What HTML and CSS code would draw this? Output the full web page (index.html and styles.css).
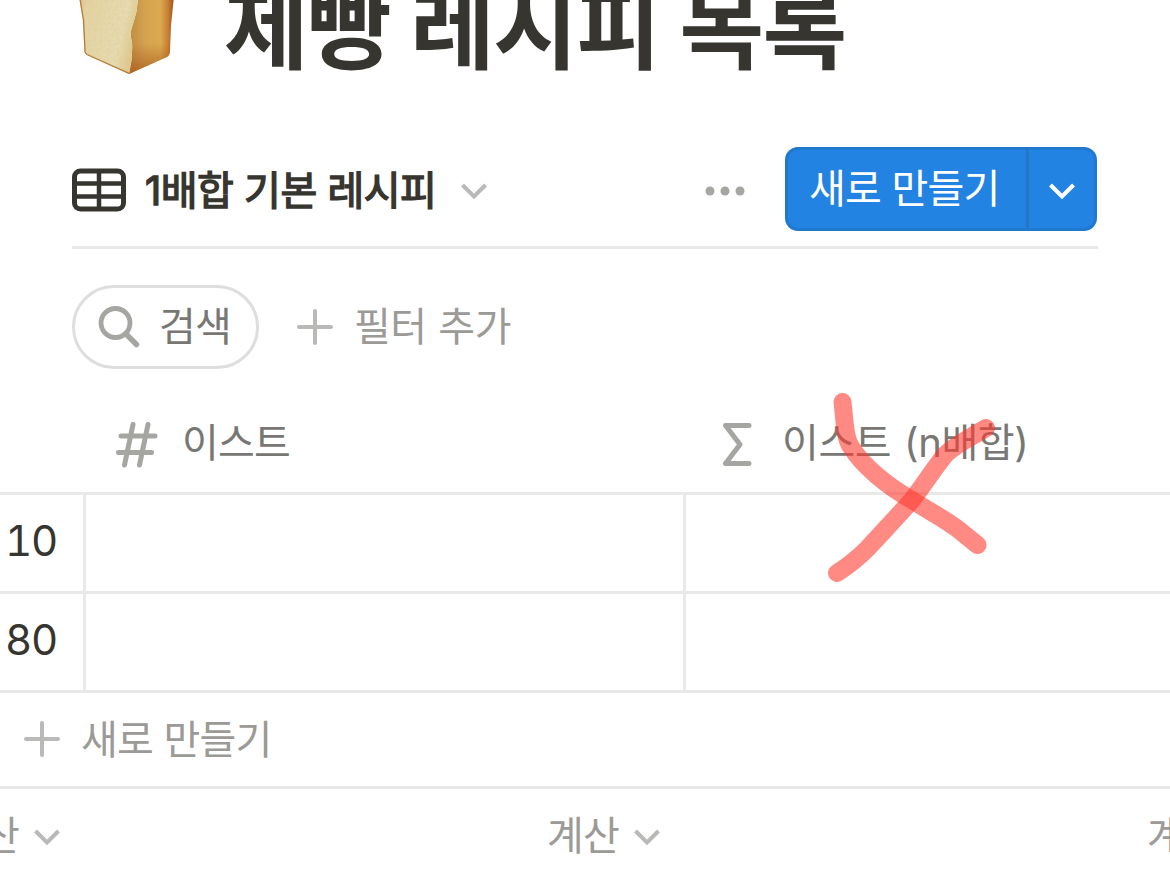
FILE: index.html
```
<!DOCTYPE html>
<html lang="ko">
<head>
  <meta charset="UTF-8">
  <title>제빵 레시피 목록</title>
  <meta name="viewport" content="width=device-width, initial-scale=1.0">
  <link rel="stylesheet" href="styles.css">
</head>
<body>
  <header class="page-header">
    <svg class="bread" width="96" height="76" viewBox="79 0 96 76">
      <defs>
        <linearGradient id="front" x1="0" y1="0" x2="1" y2="0.3">
          <stop offset="0" stop-color="#d9bd84"/>
          <stop offset="0.15" stop-color="#e3d3a2"/>
          <stop offset="0.8" stop-color="#e6dbb2"/>
          <stop offset="1" stop-color="#dcc78c"/>
        </linearGradient>
        <linearGradient id="side" x1="0" y1="0" x2="1" y2="0">
          <stop offset="0" stop-color="#c08a42"/>
          <stop offset="0.35" stop-color="#d3a350"/>
          <stop offset="0.7" stop-color="#dba94f"/>
          <stop offset="0.87" stop-color="#c67f33"/>
          <stop offset="1" stop-color="#a04f1c"/>
        </linearGradient>
        <linearGradient id="shade" x1="0" y1="0" x2="0" y2="1">
          <stop offset="0.6" stop-color="#b0601f" stop-opacity="0"/>
          <stop offset="1" stop-color="#a9591d" stop-opacity="0.8"/>
        </linearGradient>
        <filter id="crumb" x="0" y="0" width="1" height="1">
          <feTurbulence type="fractalNoise" baseFrequency="0.35" numOctaves="2" seed="4"/>
          <feColorMatrix values="0 0 0 0 0.76  0 0 0 0 0.62  0 0 0 0 0.32  1.6 0 0 0 -0.62"/>
          <feComposite in2="SourceGraphic" operator="in"/>
        </filter>
      </defs>
      <path d="M138 -4 Q138 10 133 24 Q129 34 132 42 Q133 58 129 74 L167 57 Q170 55 170 51 L171 26 L174 -4 Z" fill="url(#side)"/>
      <path d="M138 -4 Q138 10 133 24 Q129 34 132 42 Q133 58 129 74 L167 57 Q170 55 170 51 L171 26 L174 -4 Z" fill="url(#shade)"/>
      <path d="M79 -4 L83 20 L84.500 50 Q84 53 87 55 L129 74 Q133 58 132 42 Q129 34 133 24 Q138 10 138 -4 Z" fill="url(#front)"/>
      <path d="M79 -4 L83 20 L84.500 50 Q84 53 87 55 L129 74 Q133 58 132 42 Q129 34 133 24 Q138 10 138 -4 Z" filter="url(#crumb)"/>
      <path d="M79.500 -4 L83.500 20 L85 50 Q84.500 53 87 54.500 L129 73.300" fill="none" stroke="#b87b38" stroke-width="1.300"/>
    </svg>
    <h1>제빵 레시피 목록</h1>
  </header>

  <nav class="view-bar">
    <div class="view-tab">
      <svg width="54" height="44" viewBox="0 0 54 44" fill="none" stroke="currentColor">
        <rect x="2.500" y="3" width="49" height="38" rx="6" stroke-width="5"/>
        <path d="M4 15.500H50M4 28.500H50M27 4V40" stroke-width="4.500"/>
      </svg>
      <span>1배합 기본 레시피</span>
      <svg class="chevron" width="26" height="17" viewBox="0 0 26 17"><path d="M1.500 2L13 13.500L24.500 2"/></svg>
    </div>
    <div class="view-actions">
      <svg class="dots" width="40" height="10" viewBox="0 0 40 10"><circle cx="5" cy="5" r="4.500"/><circle cx="20" cy="5" r="4.500"/><circle cx="35" cy="5" r="4.500"/></svg>
      <div class="new-btn">
        <span class="new-label">새로 만들기</span>
        <span class="new-more">
          <svg class="chevron" width="26" height="17" viewBox="0 0 26 17"><path d="M1.500 2L13 13.500L24.500 2"/></svg>
        </span>
      </div>
    </div>
  </nav>

  <div class="filters">
    <div class="search">
      <svg width="42" height="42" viewBox="0 0 42 42" fill="none" stroke="currentColor">
        <circle cx="17.500" cy="17" r="14.500" stroke-width="4.800"/>
        <path d="M28 28L38.500 38.500" stroke-width="5.500" stroke-linecap="round"/>
      </svg>
      <span>검색</span>
    </div>
    <div class="add-filter">
      <svg class="plus" width="36" height="36" viewBox="0 0 36 36"><path d="M2 18H34M18 2V34"/></svg>
      <span>필터 추가</span>
    </div>
  </div>

  <main class="table">
    <div class="row head">
      <div class="cell"></div>
      <div class="cell">
        <svg class="prop-icon" width="42" height="46" viewBox="0 0 42 46"><path d="M5 14H39M2.500 30.500H35.500M17 2.500L8.500 43M32 2.500L23.500 43"/></svg>
        <span>이스트</span>
      </div>
      <div class="cell">
        <svg class="prop-icon" width="42" height="46" viewBox="0 0 42 46"><path d="M33 3.500H9.500L24 22.500L9.500 41.500H33"/></svg>
        <span>이스트 (n배합)</span>
      </div>
    </div>
    <div class="row">
      <div class="cell num">10</div>
      <div class="cell"></div>
      <div class="cell"></div>
    </div>
    <div class="row">
      <div class="cell num">80</div>
      <div class="cell"></div>
      <div class="cell"></div>
    </div>
    <div class="add-row">
      <svg class="plus" width="36" height="36" viewBox="0 0 36 36"><path d="M2 18H34M18 2V34"/></svg>
      <span>새로 만들기</span>
    </div>
    <div class="row calc">
      <div class="cell"><span>계산</span><svg class="chevron" width="26" height="17" viewBox="0 0 26 17"><path d="M1.500 2L13 13.500L24.500 2"/></svg></div>
      <div class="cell"><span>계산</span><svg class="chevron" width="26" height="17" viewBox="0 0 26 17"><path d="M1.500 2L13 13.500L24.500 2"/></svg></div>
      <div class="cell"><span>계산</span><svg class="chevron" width="26" height="17" viewBox="0 0 26 17"><path d="M1.500 2L13 13.500L24.500 2"/></svg></div>
    </div>
  </main>

  <!-- hand-drawn cross over the formula column -->
  <svg class="cross" width="174" height="190" viewBox="826 392 174 190">
    <path d="M842.500 402C845 424 845 438 851 447C863 466 887 486 912 500C929 511 948 521 959 530L977.500 545"/>
    <path d="M986 428C970 438 956 444 946 454C937 464 928 479 912 500C896 518 880 535 867 549C858 558 848 566 837 573"/>
  </svg>
</body>
</html>
```

FILE: styles.css
```
:root {
  --text: #37352f;
  --muted: #787774;
  --light: #9b9a97;
  --icon: #a5a5a2;
  --faint: #b9b9b7;
  --line: #e9e9e7;
  --blue: #2383e2;
}

* {
  box-sizing: border-box;
}

body {
  margin: 0;
  height: 886px;
  overflow: hidden;
  position: relative;
  background: #fff;
  color: var(--text);
  font-family: Inter, "Noto Sans CJK KR", sans-serif;
  font-size: 40px;
  line-height: 60px;
  letter-spacing: -0.8px;
  white-space: nowrap;
}

svg {
  flex: none;
  display: block;
}

.page-header {
  height: 147px;
  padding-left: 79px;
  display: flex;
  align-items: flex-start;
  gap: 49px;
  overflow: hidden;
}

.page-header h1 {
  margin: -43px 0 0;
  font-family: "Noto Sans CJK KR", sans-serif;
  font-size: 92px;
  line-height: 130px;
  font-weight: 700;
  letter-spacing: -1.6px;
  word-spacing: -4px;
}

.view-bar {
  margin: 0 72px;
  height: 102px;
  border-bottom: 3px solid var(--line);
  display: flex;
  justify-content: space-between;
  align-items: flex-start;
}

.view-tab {
  height: 86px;
  display: flex;
  align-items: center;
}

.view-tab span {
  width: 295px;
  margin: 2px 21px 0 19px;
  letter-spacing: -0.5px;
  -webkit-text-stroke: 1.4px var(--text);
}

.view-tab .chevron {
  margin-top: 3px;
}

.view-actions {
  display: flex;
  align-items: center;
  gap: 40px;
}

.dots {
  fill: var(--icon);
  margin-top: 3px;
}

.chevron {
  fill: none;
  stroke: var(--faint);
  stroke-width: 4;
}

.new-btn {
  width: 312px;
  height: 84px;
  margin-right: 1px;
  display: flex;
  border: 3px solid #2078cf;
  border-radius: 13px;
  background: var(--blue);
  color: #fff;
}

.new-label {
  flex: 1;
  padding-left: 21px;
  line-height: 78px;
}

.new-more {
  width: 68px;
  border-left: 3px solid #2676c6;
  display: flex;
  align-items: center;
  justify-content: center;
  padding-top: 5px;
}

.new-more .chevron {
  stroke: #fff;
}

.filters {
  height: 120px;
  padding: 36px 72px 0;
  display: flex;
  gap: 38px;
}

.search {
  width: 187px;
  height: 84px;
  padding-left: 23px;
  border: 3px solid #dededd;
  border-radius: 42px;
  display: flex;
  align-items: center;
  gap: 19px;
  color: var(--muted);
}

.search svg {
  color: var(--icon);
}

.add-filter {
  height: 84px;
  display: flex;
  align-items: center;
  gap: 21px;
  color: var(--light);
  word-spacing: 1px;
}

.add-filter span {
  letter-spacing: -0.5px;
}

.plus {
  fill: none;
  stroke: var(--faint);
  stroke-width: 4;
  stroke-linecap: round;
}

.table {
  width: 1286px;
}

.row {
  display: grid;
  grid-template-columns: 86px 600px 600px;
  height: 99px;
  border-bottom: 3px solid var(--line);
}

.cell {
  display: flex;
  align-items: center;
  border-right: 3px solid var(--line);
}

.num {
  justify-content: flex-end;
  padding-right: 26px;
  padding-bottom: 4px;
  font-size: 42px;
  letter-spacing: -1.2px;
  font-variant-numeric: tabular-nums;
}

.head {
  height: 126px;
  padding-top: 24px;
  color: var(--muted);
}

.head .cell {
  border-right: none;
  padding-left: 30px;
  gap: 24px;
}

.head span {
  word-spacing: 2px;
}

.head .cell:last-child span {
  letter-spacing: -0.4px;
}

.prop-icon {
  fill: none;
  stroke: var(--icon);
  stroke-width: 5;
  stroke-linecap: round;
  stroke-linejoin: round;
  margin-top: 4px;
}

.add-row {
  height: 96px;
  padding-left: 24px;
  border-bottom: 3px solid var(--line);
  display: flex;
  align-items: center;
  gap: 21px;
  color: var(--light);
}

.add-row .plus {
  margin-bottom: 2px;
}

.calc {
  height: 97px;
  padding-bottom: 3px;
  border-bottom: none;
  color: var(--light);
}

.calc .cell {
  border-right: none;
  justify-content: flex-end;
  gap: 15px;
  padding-right: 26px;
}

.calc .chevron {
  margin-top: 2px;
}

/* sits on top of the table */
.cross {
  position: absolute;
  left: 826px;
  top: 392px;
  fill: none;
  stroke: #ff3b30;
  stroke-opacity: 0.6;
  stroke-width: 18;
  stroke-linecap: round;
  stroke-linejoin: round;
}
```
